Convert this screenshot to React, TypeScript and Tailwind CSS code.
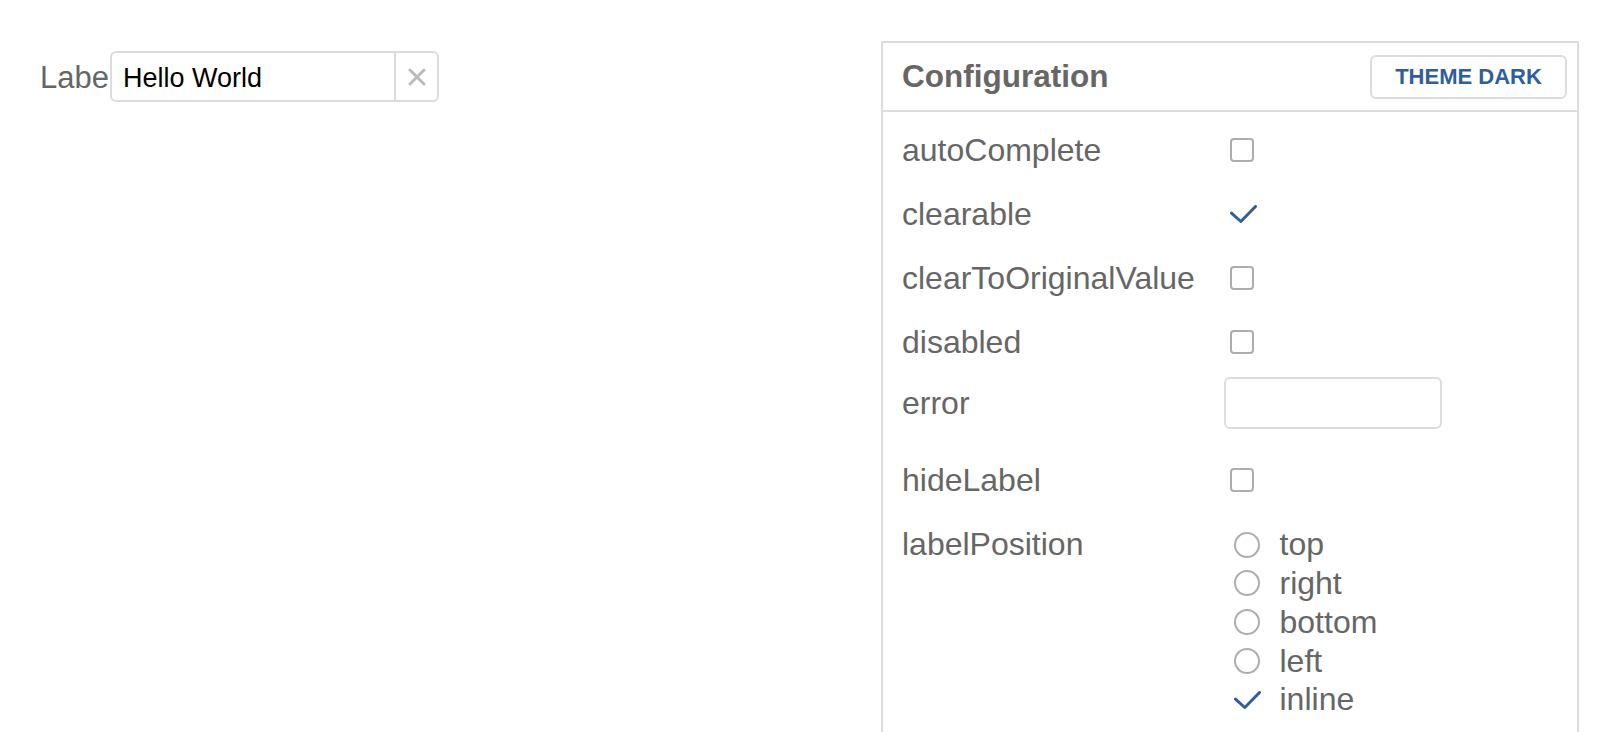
import { useState } from "react";

const font = { fontFamily: '"Liberation Sans", Arial, sans-serif' };

const positions = ["top", "right", "bottom", "left", "inline"];

function Tick() {
  return (
    <svg width="27" height="18" viewBox="0 0 27 18" fill="none" className="block">
      <polyline
        points="1.5,8.1 10.8,16.5 25.5,1.5"
        stroke="#2f5e9e"
        strokeWidth="3"
        strokeLinecap="round"
        strokeLinejoin="round"
      />
    </svg>
  );
}

function Toggle({ checked, onChange }: { checked: boolean; onChange: () => void }) {
  return (
    <button type="button" onClick={onChange} className="ml-[6px] flex items-center">
      {checked ? (
        <Tick />
      ) : (
        <span className="block w-[24px] h-[24px] rounded-[4px] border-2 border-[#adadad] bg-white" />
      )}
    </button>
  );
}

function Row({ label, children }: { label: string; children: React.ReactNode }) {
  return (
    <div className="flex items-center py-[13px]">
      <div className="w-[322px] leading-[38px]">{label}</div>
      <div className="flex items-center">{children}</div>
    </div>
  );
}

export default function App() {
  const [value, setValue] = useState("Hello World");
  const [flags, setFlags] = useState<Record<string, boolean>>({
    autoComplete: false,
    clearable: true,
    clearToOriginalValue: false,
    disabled: false,
    hideLabel: false,
  });
  const [labelPosition, setLabelPosition] = useState("inline");

  const toggle = (key: string) => setFlags((f) => ({ ...f, [key]: !f[key] }));

  return (
    <div className="min-h-screen bg-white flex pt-[41px] pl-[40px] pr-[41px] text-[#666]" style={font}>
      {/* Preview */}
      <div className="flex-1 pt-[10px]">
        <div className="flex items-center">
          <div className="w-[70px] pt-[3px] overflow-hidden whitespace-nowrap text-[31px] leading-[36px] text-[#666]">
            Label
          </div>
          <div className="flex h-[51px] w-[329px] rounded-[6px] border-2 border-[#dcdcdc] bg-white">
            <input
              value={value}
              onChange={(e) => setValue(e.target.value)}
              className="flex-1 min-w-0 pl-[11px] pt-[3px] text-[27px] text-black outline-none bg-transparent"
              style={font}
            />
            {flags.clearable && (
              <button
                type="button"
                onClick={() => setValue("")}
                className="w-[43px] border-l-2 border-[#dcdcdc] flex items-center justify-center"
              >
                <svg width="18" height="18" viewBox="0 0 18 18">
                  <path d="M2 2 16 16M16 2 2 16" stroke="#bbbbbb" strokeWidth="3" strokeLinecap="round" />
                </svg>
              </button>
            )}
          </div>
        </div>
      </div>

      {/* Configuration panel */}
      <div className="w-[698px] border-2 border-[#dddddd] self-start">
        <div className="flex items-center justify-between border-b-2 border-[#dddddd] pl-[19px] pr-[10px] py-[10px]">
          <h2 className="text-[31.5px] font-bold text-[#666]">Configuration</h2>
          <button
            type="button"
            className="h-[44px] w-[197px] rounded-[6px] border-2 border-[#dddddd] bg-white text-[22px] font-bold text-[#2f5e9e]"
          >
            THEME DARK
          </button>
        </div>

        <div className="pl-[19px] pt-[6px] pb-[30px] text-[32px]">
          {["autoComplete", "clearable", "clearToOriginalValue", "disabled"].map((key) => (
            <Row key={key} label={key}>
              <Toggle checked={flags[key]} onChange={() => toggle(key)} />
            </Row>
          ))}

          <div className="flex items-center h-[58px] mb-[16px]">
            <div className="w-[322px] leading-[38px]">error</div>
            <input className="h-[52px] w-[218px] rounded-[6px] border-2 border-[#dddddd] outline-none px-3 text-[24px]" />
          </div>

          <Row label="hideLabel">
            <Toggle checked={flags.hideLabel} onChange={() => toggle("hideLabel")} />
          </Row>

          <div className="flex items-start py-[13px]">
            <div className="w-[322px] leading-[38.75px]">labelPosition</div>
            <div className="ml-[9.5px] flex flex-col">
              {positions.map((p) => (
                <button
                  key={p}
                  type="button"
                  onClick={() => setLabelPosition(p)}
                  className="flex items-center leading-[38.75px] text-left"
                >
                  <span className="w-[27px] flex items-center justify-start">
                    {labelPosition === p ? (
                      <Tick />
                    ) : (
                      <span className="block w-[26px] h-[26px] rounded-full border-2 border-[#adadad]" />
                    )}
                  </span>
                  <span className="ml-[19px]">{p}</span>
                </button>
              ))}
            </div>
          </div>
        </div>
      </div>
    </div>
  );
}
